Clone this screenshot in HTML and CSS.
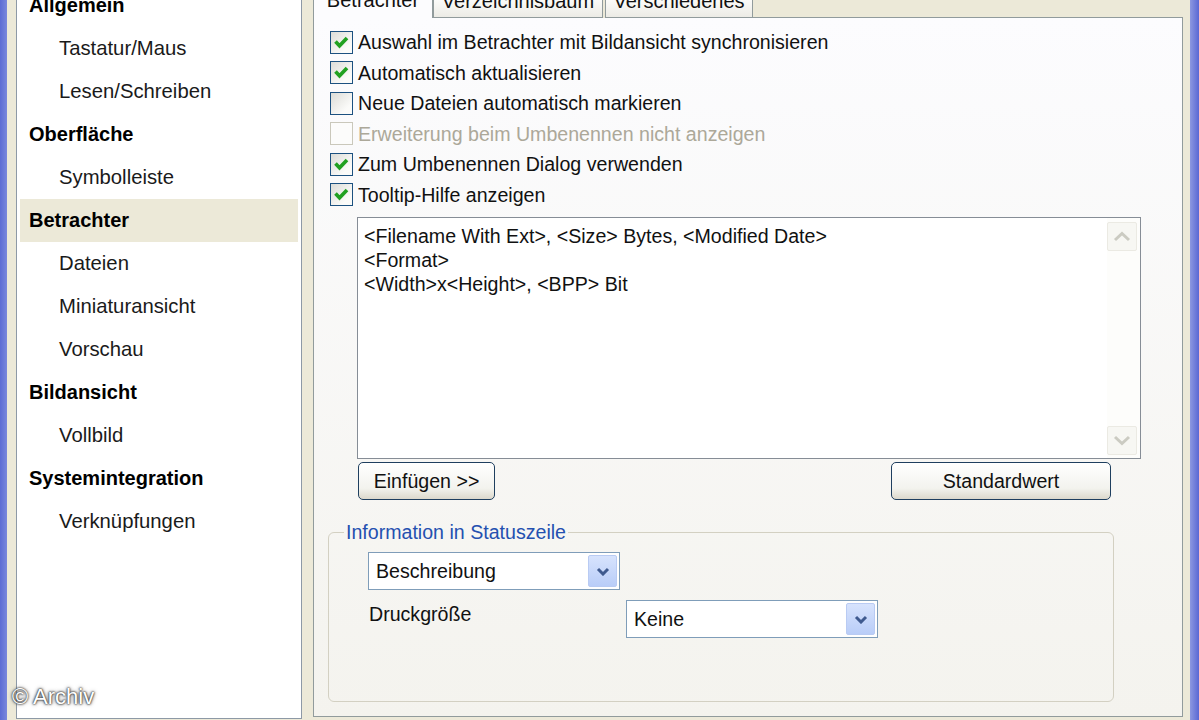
FILE: index.html
```html
<!DOCTYPE html>
<html lang="de">
<head>
<meta charset="utf-8">
<title>Optionen – Betrachter</title>
<link rel="stylesheet" href="styles.css">
</head>
<body>
<div class="frame">
  <div class="edge edge-left"></div>

  <nav class="tree">
    <ul class="tree-list">
      <li class="cat">Allgemein</li>
      <li class="sub">Tastatur/Maus</li>
      <li class="sub">Lesen/Schreiben</li>
      <li class="cat">Oberfläche</li>
      <li class="sub">Symbolleiste</li>
      <li class="cat selected">Betrachter</li>
      <li class="sub">Dateien</li>
      <li class="sub">Miniaturansicht</li>
      <li class="sub">Vorschau</li>
      <li class="cat">Bildansicht</li>
      <li class="sub">Vollbild</li>
      <li class="cat">Systemintegration</li>
      <li class="sub">Verknüpfungen</li>
    </ul>
  </nav>

  <main class="dialog">
    <div class="tabs">
      <div class="tab tab-active tab-w1"><span class="tab-label">Betrachter</span></div>
      <div class="tab tab-w2"><span class="tab-label">Verzeichnisbaum</span></div>
      <div class="tab tab-w3"><span class="tab-label">Verschiedenes</span></div>
      <div class="tab-fill"></div>
    </div>

    <div class="page">
      <ul class="checks">
        <li class="check"><span class="box"><svg viewBox="0 0 21 21" width="21" height="21"><path d="M4.5 9.5 L8.5 13.8 L16 6" fill="none" stroke="#21a121" stroke-width="3.6"/></svg></span><span>Auswahl im Betrachter mit Bildansicht synchronisieren</span></li>
        <li class="check"><span class="box"><svg viewBox="0 0 21 21" width="21" height="21"><path d="M4.5 9.5 L8.5 13.8 L16 6" fill="none" stroke="#21a121" stroke-width="3.6"/></svg></span><span>Automatisch aktualisieren</span></li>
        <li class="check"><span class="box"></span><span>Neue Dateien automatisch markieren</span></li>
        <li class="check disabled"><span class="box"></span><span>Erweiterung beim Umbenennen nicht anzeigen</span></li>
        <li class="check"><span class="box"><svg viewBox="0 0 21 21" width="21" height="21"><path d="M4.5 9.5 L8.5 13.8 L16 6" fill="none" stroke="#21a121" stroke-width="3.6"/></svg></span><span>Zum Umbenennen Dialog verwenden</span></li>
        <li class="check"><span class="box"><svg viewBox="0 0 21 21" width="21" height="21"><path d="M4.5 9.5 L8.5 13.8 L16 6" fill="none" stroke="#21a121" stroke-width="3.6"/></svg></span><span>Tooltip-Hilfe anzeigen</span></li>
      </ul>

      <div class="memo">
        <div class="memo-text">
          <div>&lt;Filename With Ext&gt;, &lt;Size&gt; Bytes, &lt;Modified Date&gt;</div>
          <div>&lt;Format&gt;</div>
          <div>&lt;Width&gt;x&lt;Height&gt;, &lt;BPP&gt; Bit</div>
        </div>
        <div class="memo-scroll">
          <div class="sb-btn"><svg viewBox="0 0 18 11" width="18" height="11"><path d="M2 9 L9 2.5 L16 9" fill="none" stroke="#cbcbc2" stroke-width="3"/></svg></div>
          <div class="sb-track"></div>
          <div class="sb-btn"><svg viewBox="0 0 18 11" width="18" height="11"><path d="M2 2 L9 8.5 L16 2" fill="none" stroke="#cbcbc2" stroke-width="3"/></svg></div>
        </div>
      </div>

      <div class="actions">
        <button class="btn btn-insert" type="button">Einfügen &gt;&gt;</button>
        <button class="btn btn-default" type="button">Standardwert</button>
      </div>

      <fieldset class="group">
        <legend class="group-title">Information in Statuszeile</legend>
        <div class="combo combo-first">
          <span class="combo-value">Beschreibung</span>
          <span class="combo-btn"><svg viewBox="0 0 14 9" width="14" height="9"><path d="M2 2 L7 7 L12 2" fill="none" stroke="#3f5a8f" stroke-width="3"/></svg></span>
        </div>
        <div class="field-row">
          <span class="field-label">Druckgröße</span>
          <div class="combo">
            <span class="combo-value">Keine</span>
            <span class="combo-btn"><svg viewBox="0 0 14 9" width="14" height="9"><path d="M2 2 L7 7 L12 2" fill="none" stroke="#3f5a8f" stroke-width="3"/></svg></span>
          </div>
        </div>
      </fieldset>
    </div>
  </main>

  <div class="edge edge-right"></div>
</div>
<div class="watermark">© Archiv</div>
</body>
</html>
```

FILE: styles.css
```css
html, body {
  margin: 0;
  padding: 0;
}

body {
  width: 1199px;
  height: 720px;
  overflow: hidden;
  position: relative;
  background: #ece9d8;
  font-family: "Liberation Sans", Arial, sans-serif;
  font-size: 20px;
  color: #111;
}

.frame {
  display: flex;
  height: 720px;
  background: #ece9d8;
}

.edge {
  flex: none;
  height: 720px;
}

.edge-left {
  width: 7px;
  background: linear-gradient(90deg, #5c6cd4, #7a88dc);
}

.edge-right {
  width: 9px;
  margin-left: 7px;
  background: linear-gradient(90deg, #8d98e0, #5a68d4);
}

/* ---------- left tree ---------- */
.tree {
  flex: none;
  align-self: flex-start;
  box-sizing: border-box;
  width: 286px;
  height: 721px;
  margin-top: -2px;
  margin-left: 9px;
  border: 1px solid #8d99a6;
  background: #fff;
  overflow: hidden;
}

.tree-list {
  list-style: none;
  margin: -15.5px 0 0 0;
  padding: 0 3px;
}

.tree-list li {
  height: 43px;
  line-height: 43px;
  white-space: nowrap;
}

.cat {
  padding-left: 9px;
  font-weight: bold;
  color: #000;
}

.sub {
  padding-left: 39px;
  color: #1a1a1a;
  font-size: 20.3px;
}

.selected {
  background: #ece9d8;
}

/* ---------- dialog / tabs ---------- */
.dialog {
  flex: none;
  width: 870px;
  height: 717px;
  margin-left: 11px;
  display: flex;
  flex-direction: column;
}

.tabs {
  display: flex;
  height: 18px;
  flex: none;
}

.tab {
  box-sizing: border-box;
  height: 18px;
  line-height: 20px;
  text-align: center;
  white-space: nowrap;
  border: 1px solid #919b9c;
  border-top: none;
  background: linear-gradient(#fbfbf9, #ecebe5);
  color: #111;
}

.tab-label {
  display: block;
  margin-top: -9px;
}

.tab-active {
  border-bottom: none;
  background: #fcfcfe;
}

.tab-active .tab-label {
  margin-top: -10px;
}

.tab-w1 { width: 120px; }
.tab-w2 { width: 170px; }
.tab-w3 { width: 148px; margin-left: 2px; }

.tab-fill {
  flex: 1;
  border-bottom: 1px solid #919b9c;
}

.page {
  flex: 1;
  box-sizing: border-box;
  border: 1px solid #919b9c;
  border-top: none;
  background: linear-gradient(#fcfcfe, #f4f3ee);
  padding-top: 8.75px;
  font-size: 19.6px;
}

/* ---------- checkboxes ---------- */
.checks {
  list-style: none;
  margin: 0;
  padding: 0 0 0 16px;
}

.check {
  display: flex;
  align-items: center;
  gap: 5px;
  height: 30.5px;
  line-height: 20px;
  white-space: nowrap;
}

.box {
  flex: none;
  box-sizing: border-box;
  width: 23px;
  height: 23px;
  border: 1px solid #1c5180;
  background: linear-gradient(135deg, #dcdcd7, #fbfbf9 75%);
  display: flex;
}

.disabled {
  color: #aca899;
}

.disabled .box {
  border-color: #cac8bb;
  background: #fcfcfb;
}

/* ---------- memo ---------- */
.memo {
  box-sizing: border-box;
  display: flex;
  width: 784px;
  height: 242px;
  margin: 7.25px 0 0 43px;
  border: 1px solid #868d96;
  background: #fff;
}

.memo-text {
  flex: 1;
  padding: 6px 0 0 6px;
  line-height: 24px;
  white-space: nowrap;
}

.memo-scroll {
  flex: none;
  width: 30px;
  padding: 4px 3px 3px 0;
  display: flex;
  flex-direction: column;
  background: #fdfdfb;
}

.sb-btn {
  box-sizing: border-box;
  height: 29px;
  border: 1px solid #ebeae3;
  border-radius: 2px;
  background: #f7f7f3;
  display: flex;
  align-items: center;
  justify-content: center;
}

.sb-track {
  flex: 1;
}

/* ---------- buttons ---------- */
.actions {
  display: flex;
  justify-content: space-between;
  width: 753px;
  margin: 3px 0 0 44px;
}

.btn {
  box-sizing: border-box;
  height: 38px;
  padding: 0;
  border: 1px solid #1f3f5f;
  border-radius: 5px;
  background: linear-gradient(#ffffff, #f3f3ee 70%, #dcd8cc);
  font-family: "Liberation Sans", Arial, sans-serif;
  font-size: 19.6px;
  color: #111;
}

.btn-insert { width: 137px; }
.btn-default { width: 220px; }

/* ---------- group box ---------- */
.group {
  box-sizing: border-box;
  width: 786px;
  margin: 22px 0 0 14px;
  padding: 0 0 63px 0;
  border: 1px solid #d3d0c2;
  border-radius: 6px;
  min-width: 0;
}

.group-title {
  margin-left: 15px;
  padding: 0 2px;
  line-height: 20px;
  color: #2450b0;
}

.combo {
  box-sizing: border-box;
  display: flex;
  align-items: center;
  width: 252px;
  height: 38px;
  border: 1px solid #7f9db9;
  background: #fff;
}

.combo-first {
  margin: 10px 0 0 39px;
}

.combo-value {
  flex: 1;
  padding-left: 7px;
  line-height: 20px;
  white-space: nowrap;
}

.combo-btn {
  flex: none;
  box-sizing: border-box;
  width: 29px;
  height: 32px;
  margin-right: 2px;
  border: 1px solid #b9cbf3;
  border-radius: 2px;
  background: linear-gradient(#d7e3fd, #b9cdf8);
  display: flex;
  align-items: center;
  justify-content: center;
}

.field-row {
  display: flex;
  margin: 10px 0 0 40px;
}

.field-label {
  flex: none;
  width: 257px;
  margin-top: 4px;
  line-height: 20px;
}

/* ---------- watermark ---------- */
.watermark {
  position: absolute;
  left: 12px;
  top: 685px;
  font-size: 22px;
  line-height: 24px;
  color: #fff;
  text-shadow: 0 0 2px #333, 0 0 2px #333, 0 0 4px #666;
}
```
